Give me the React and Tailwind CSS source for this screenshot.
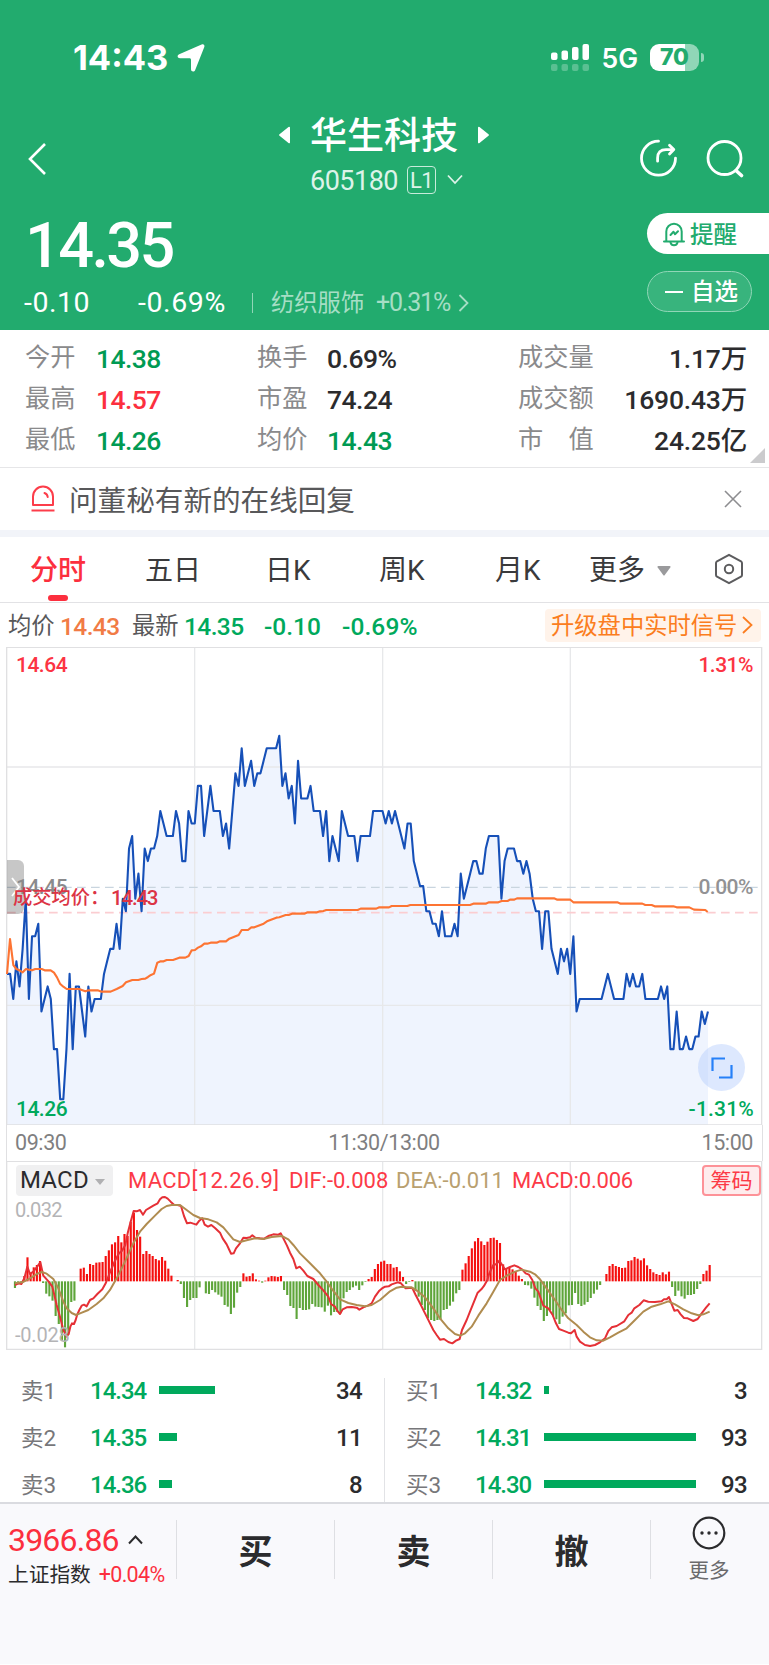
import clsx from 'clsx'

const FONT = "font-['Roboto','Noto_Sans_CJK_SC',sans-serif]"

// one entry per minute, in ticks of 0.01 from yesterday's close
const TICKS = [
  -7, -7, -9, -6, -8, -5, -1, -9, -4, -4, -3, -10, -9, -8, -9, -13, -13, -17, -17, -13,
  -7, -13, -8, -8, -10, -12, -8, -10, -9, -9, -9, -7, -6, -5, -5, -3, -5, -1, -2, 3,
  4, -1, 1, -2, 3, 2, 3, 3, 4, 6, 5, 4, 4, 4, 6, 5, 2, 2, 6, 5,
  5, 8, 8, 4, 6, 8, 6, 6, 6, 4, 5, 3, 6, 9, 8, 11, 8, 9, 10, 8,
  9, 9, 10, 11, 11, 11, 11, 12, 8, 9, 7, 8, 5, 10, 7, 7, 7, 8, 6, 6,
  6, 4, 6, 2, 4, 3, 2, 6, 5, 4, 4, 4, 2, 4, 4, 4, 4, 6, 6, 6,
  6, 5, 6, 5, 6, 5, 4, 3, 5, 5, 2, 1, 0, 0, -2, -2, -3, -3, -4, -2,
  -4, -4, -4, -3, -4, 1, -1, 0, 1, 2, 2, 1, 1, 3, 4, 4, 4, 4, -1, 2,
  3, 3, 3, 2, 2, 1, 2, 1, -1, -2, -2, -5, -2, -2, -5, -6, -7, -5, -6, -5,
  -7, -4, -10, -9, -9, -9, -9, -9, -9, -9, -9, -8, -7, -8, -9, -9, -9, -9, -7, -8,
  -7, -8, -8, -7, -9, -9, -9, -9, -9, -8, -9, -8, -13, -13, -10, -13, -13, -12, -13, -13,
  -12, -12, -10, -11, -10,
]

const MACD_BARS = [
  -20, -9, -8, 16, 72, 26, 42, 49, 61, -5, -37, -45, -58, -104, -128, -178, -198, -160, -62, -58,
  0, 38, 41, 22, 52, 49, 56, 57, 58, 76, 93, 111, 117, 136, 117, 142, 136, 179, 206, 154,
  134, 82, 91, 82, 76, 67, 63, 73, 62, 38, 17, 0, 4, -8, -50, -77, -56, -50, -50, -18,
  0, -36, -38, -26, -33, -40, -46, -71, -76, -98, -79, -34, -17, 24, 14, 16, 24, 6, 2, -4,
  2, 12, 16, 15, 13, 16, -26, -41, -74, -80, -113, -80, -86, -86, -84, -68, -76, -77, -78, -91,
  -73, -102, -92, -92, -96, -51, -32, -26, -18, -13, -26, -12, -2, 7, 13, 37, 52, 59, 62, 52,
  52, 41, 43, 30, 13, -8, -2, 4, -28, -46, -71, -86, -111, -116, -119, -116, -116, -86, -83, -73,
  -61, -36, -26, 35, 54, 76, 99, 120, 130, 120, 109, 119, 130, 131, 124, 115, 51, 39, 41, 36,
  31, 17, 7, -11, -12, -22, -49, -74, -86, -119, -104, -86, -105, -114, -128, -106, -96, -72, -71, -35,
  -68, -74, -70, -62, -50, -37, -25, -11, 0, 22, 46, 52, 46, 43, 40, 41, 61, 63, 73, 68,
  63, 69, 48, 37, 27, 22, 19, 27, 21, 29, -17, -44, -28, -45, -52, -41, -41, -38, -23, -8,
  22, 32, 49,
]

// the curves below use 3 units per css pixel
const AVG_LINE =
  '21,1002 30,897 40,975 49,987 58,991 68,997 78,987 87,989 96,991 106,987 125,987 134,991 152,991 162,998 171,1012 180,1031 190,1040 200,1047 237,1047 256,1054 265,1051 293,1051 305,1055 332,1055 350,1047 368,1038 378,1027 397,1020 415,1020 425,1017 436,1016 444,1011 453,1005 462,1001 472,968 482,964 491,964 500,960 519,960 538,953 556,953 566,948 575,931 585,930 594,923 603,919 613,911 622,911 632,908 650,908 660,904 678,904 688,896 716,885 725,870 744,870 754,862 763,862 791,851 801,844 829,833 838,832 857,825 866,825 876,821 913,821 923,817 951,817 960,814 970,813 979,810 1073,810 1082,806 1129,806 1138,802 1167,802 1175,798 1222,798 1231,795 1410,795 1420,791 1457,791 1467,787 1495,787 1505,783 1523,783 1530,779 1543,779 1551,775 1662,775 1672,779 1711,779 1720,787 1852,787 1862,791 1927,791 1936,795 1955,795 1964,799 2020,799 2030,802 2068,802 2082,809 2116,810 2123,816'

const DIF_LINE =
  '45,465 55,460 64,462 73,445 82,410 90,432 100,425 110,412 121,397 130,437 146,455 157,470 163,495 170,525 180,560 190,600 200,620 206,612 211,590 216,580 222,582 227,570 232,553 238,540 245,527 252,524 260,529 270,510 280,505 292,492 307,478 317,460 325,440 333,420 345,392 357,370 366,362 376,345 383,310 392,275 401,243 410,244 420,240 429,254 438,240 450,233 460,227 473,220 480,208 487,202 495,201 503,206 512,215 522,224 533,225 543,228 552,258 561,280 571,278 580,281 589,284 598,272 607,265 614,284 624,290 634,285 645,294 660,308 668,325 680,343 688,360 693,371 701,370 708,355 720,340 730,323 740,324 750,322 757,316 766,323 780,325 793,326 805,318 820,313 835,314 842,310 850,325 861,347 870,368 880,387 889,415 899,410 910,422 922,438 940,447 955,465 970,481 985,500 993,522 1005,530 1014,545 1020,552 1028,538 1040,532 1055,531 1070,533 1078,539 1090,532 1105,526 1115,520 1125,500 1138,482 1145,476 1155,470 1166,469 1175,463 1193,457 1203,460 1217,475 1228,474 1237,474 1247,495 1260,520 1280,560 1300,600 1310,615 1320,629 1332,627 1345,636 1357,640 1368,632 1379,627 1386,600 1400,570 1410,545 1420,520 1433,488 1444,478 1452,468 1462,450 1468,430 1480,405 1490,402 1498,392 1505,403 1515,418 1530,411 1543,406 1555,411 1566,418 1577,430 1587,434 1597,450 1606,475 1615,485 1622,505 1630,527 1645,535 1658,555 1668,580 1677,597 1690,602 1705,608 1713,610 1724,600 1730,620 1740,635 1755,645 1770,648 1785,645 1800,637 1815,625 1825,603 1835,592 1850,588 1873,574 1885,555 1895,548 1903,535 1918,525 1931,511 1945,515 1965,516 1985,514 1992,508 2000,508 2007,501 2013,517 2023,542 2033,540 2042,553 2052,564 2063,565 2080,573 2093,567 2105,550 2118,533 2129,520'

const DEA_LINE =
  '45,460 70,456 90,445 110,432 125,426 140,431 160,447 175,475 190,515 200,535 215,549 228,555 240,550 265,540 290,522 310,505 330,480 350,445 375,395 400,340 420,305 440,282 465,257 485,237 500,228 515,225 540,225 560,240 580,255 600,264 625,268 650,277 670,292 685,310 700,328 720,336 740,331 765,325 790,327 815,321 845,318 865,328 880,345 900,370 930,400 960,430 980,455 1000,483 1020,508 1045,519 1070,525 1095,529 1115,525 1140,510 1170,484 1190,473 1205,470 1220,472 1235,472 1255,485 1275,502 1300,535 1320,565 1345,595 1365,612 1380,617 1395,610 1415,590 1435,557 1460,520 1480,485 1500,450 1520,437 1545,425 1565,419 1590,425 1605,433 1620,448 1640,475 1665,510 1685,540 1705,565 1730,585 1750,605 1770,622 1790,631 1810,632 1830,622 1855,608 1880,595 1905,570 1930,545 1955,530 1980,523 2005,514 2025,523 2050,538 2075,550 2095,556 2110,553 2129,545'

const STEP = 9.388

function StatusBar() {
  return (
    <div className="flex h-[115px] items-start pl-[73px] pr-[65px] pt-[37px] font-['Inter',sans-serif] text-white">
      <span className="w-[94px] text-[34.5px] leading-[41px] font-bold">14:43</span>
      <svg className="ml-[9px] mt-[6px]" width="30" height="30" viewBox="0 0 30 30" fill="white">
        <path d="M25.6 1.4C27.5.6 29 2 28.3 4L19.200 27C18.3 29.3 15 29 15 26.3V16.8C15 15.7 14.5 15.2 13.4 15.2H4C1.3 15.2.8 12.2 3.2 11.2Z" />
      </svg>
      <div className="ml-auto flex">
        <svg className="mt-[6px]" width="40" height="30" viewBox="0 0 40 30" fill="white">
          <rect x="1" y="9.5" width="6.5" height="7.5" rx="2" />
          <rect x="11.5" y="7.5" width="6.5" height="9.5" rx="2" />
          <rect x="22" y="4" width="6.5" height="13" rx="2" />
          <rect x="32.5" y="1" width="6.5" height="16" rx="2" />
          <g opacity="0.25">
            <rect x="1" y="21" width="6.5" height="7" rx="2" />
            <rect x="11.5" y="21" width="6.5" height="7" rx="2" />
            <rect x="22" y="21" width="6.5" height="7" rx="2" />
            <rect x="32.5" y="21" width="6.5" height="7" rx="2" />
          </g>
        </svg>
        <span className="ml-[11px] mt-px text-[26.5px] leading-[40px] font-semibold">5G</span>
        <div className="ml-[12px] mt-[7px] flex h-[27px] items-center">
          <div className="flex h-[27px] w-[49px] items-center justify-center overflow-hidden rounded-[9px] bg-[linear-gradient(90deg,#fff_71%,#90d6b7_71%)]">
            <span className="text-[23px] leading-[27px] font-extrabold text-[#22ab6e]">70</span>
          </div>
          <div className="ml-[2px] h-[9px] w-[3px] rounded-r-full bg-[#90d6b7]" />
        </div>
      </div>
    </div>
  )
}

function Header() {
  return (
    <header className="h-[330px] bg-[#22ab6e] text-white">
      <StatusBar />
      <div className="flex h-[90px]">
        <svg className="ml-[25px] mt-[26px]" width="24" height="36" viewBox="0 0 24 36" fill="none" stroke="white" strokeWidth="2.6">
          <path d="M20 3 5 18l15 15" />
        </svg>
        <div className="ml-[227px] w-[220px]">
          <div className="flex h-[42px] items-center">
            <svg className="ml-[2px] -mt-[2px]" width="14" height="18" viewBox="0 0 14 18" fill="white">
              <path d="M12 1.5v15a1 1 0 0 1-1.5.6L1.5 9.800a1 1 0 0 1 0-1.6L10.5.9A1 1 0 0 1 12 1.5Z" />
            </svg>
            <span className="ml-[18px] mt-[2px] text-[37px] leading-[42px] font-medium">华生科技</span>
            <svg className="ml-[19px] -mt-[2px]" width="14" height="18" viewBox="0 0 14 18" fill="white">
              <path d="M1 1.5v15a1 1 0 0 0 1.5.6l9-7.3a1 1 0 0 0 0-1.6L2.5.9A1 1 0 0 0 1 1.5Z" />
            </svg>
          </div>
          <div className="mt-[8px] flex h-[30px] items-center pl-[34px] text-[#ddf3e9]">
            <span className="mt-[3px] w-[97px] text-[27px] tracking-[-0.5px]">605180</span>
            <span className="flex h-[28px] w-[29px] items-center justify-center rounded-[4px] border border-[#c8ebdb] text-[22px] tracking-[-0.5px]">L1</span>
            <svg className="ml-[11px]" width="16" height="12" viewBox="0 0 16 12" fill="none" stroke="#ddf3e9" strokeWidth="1.8">
              <path d="m1 1.5 7 7.5 7-7.5" />
            </svg>
          </div>
        </div>
        <svg className="ml-[143px] mt-[23px]" width="40" height="40" viewBox="0 0 40 40" fill="none" stroke="white" strokeWidth="2.8" strokeLinecap="round" strokeLinejoin="round">
          <path d="M19.500 3.2A17 17 0 1 0 36.500 20.2" />
          <path d="M18.600 23.2V20C18.600 14.500 21.500 11.700 27 11.700H34" />
          <path d="m30.5 7.3 4.3 4.200-4.300 4.500" />
        </svg>
        <svg className="ml-[26px] mt-[23px]" width="40" height="40" viewBox="0 0 40 40" fill="none" stroke="white" strokeWidth="2.8" strokeLinecap="round">
          <circle cx="19.5" cy="20" r="16.5" />
          <path d="m31.5 33 5 4.5" strokeWidth="3.6" />
        </svg>
      </div>
      <div className="flex h-[125px] justify-between">
        <div>
          <div className="mt-[8px] pl-[25px] text-[63px] leading-[66px] font-medium tracking-[-2.6px]">14.35</div>
          <div className="mt-[9px] flex h-[30px] items-center pl-[24px] text-[28.5px]">
            <span className="w-[114px] tracking-[0.5px]">-0.10</span>
            <span className="w-[114px] tracking-[0.6px]">-0.69%</span>
            <span className="mr-[18px] h-[20px] w-px bg-[#90d6b7]" />
            <span className="w-[105px] text-[23.3px] text-[#a6dec5]">纺织服饰</span>
            <span className="w-[75px] text-[25px] tracking-[-1.2px] text-[#a6dec5]">+0.31%</span>
            <svg className="ml-[7px]" width="11" height="18" viewBox="0 0 11 18" fill="none" stroke="#a6dec5" strokeWidth="1.8">
              <path d="m1.5 1 8 8-8 8" />
            </svg>
          </div>
        </div>
        <div className="flex w-[122px] flex-col text-[23.5px] leading-[40px] font-medium">
          <div className="mt-[8px] flex h-[41px] items-center rounded-l-full bg-white pl-[15px] text-[#22ab6e]">
            <svg className="mr-[4px]" width="24" height="26" viewBox="0 0 24 26" fill="none" stroke="#22ab6e" strokeWidth="2" strokeLinejoin="round" strokeLinecap="round">
              <path d="M2 20.5h20M4.3 20.5V10.5a7.7 7.7 0 0 1 15.4 0v10" />
              <path d="M8.5 21.5a3.6 3.6 0 0 0 7 0" />
              <path d="m8.5 14 3-3.2 1.5 2.4 3-3" />
            </svg>
            <span className="mt-[2px]">提醒</span>
          </div>
          <div className="mt-[17px] flex h-[41px] w-[105px] items-center rounded-full border border-[#90d6b7] bg-[#38b47d] pl-[17px]">
            <span className="mr-[8px] h-[2px] w-[18px] bg-white" />
            <span className="mt-px">自选</span>
          </div>
        </div>
      </div>
    </header>
  )
}

const STATS = [
  ['今开', '14.38', 'text-[#009a53]', '换手', '0.69%', 'text-[#2b2b2d]', '成交量', '1.17万'],
  ['最高', '14.57', 'text-[#fc2f3e]', '市盈', '74.24', 'text-[#2b2b2d]', '成交额', '1690.43万'],
  ['最低', '14.26', 'text-[#009a53]', '均价', '14.43', 'text-[#009a53]', '市　值', '24.25亿'],
]

function Stats() {
  return (
    <section className="relative h-[138px] border-b border-[#e6e6e8] pt-[7px] text-[25.2px]">
      {STATS.map(([l1, v1, c1, l2, v2, c2, l3, v3]) => (
        <div key={l1} className="flex h-[41px] items-center pl-[25px] pr-[22px] leading-[36px] text-[#8a8a8c]">
          <span className="w-[71px]">{l1}</span>
          <span className={clsx('w-[161px] pt-[3px] text-[26.5px] font-medium tracking-[-0.6px]', c1)}>{v1}</span>
          <span className="w-[70px]">{l2}</span>
          <span className={clsx('w-[191px] pt-[3px] text-[26.5px] font-medium tracking-[-0.5px]', c2)}>{v2}</span>
          <span>{l3}</span>
          <span className="ml-auto pt-[3px] text-[26.5px] font-medium tracking-[-0.2px] text-[#2b2b2d]">{v3}</span>
        </div>
      ))}
      <svg className="absolute right-[4px] bottom-[4px]" width="15" height="15" viewBox="0 0 15 15">
        <path d="M15 0v15H0Z" fill="#cbcbcd" />
      </svg>
    </section>
  )
}

function Notice() {
  return (
    <section className="flex h-[69px] items-center border-b-[7px] border-[#f2f4f9] pl-[30px] pr-[27px]">
      <svg width="26" height="28" viewBox="0 0 26 28" fill="none" stroke="#fc3d4a" strokeWidth="2">
        <path d="M3 20V11.5a10 10 0 0 1 20 0V20Z" strokeLinejoin="round" />
        <path d="M1.5 25.5h23" />
        <path d="M14.5 8c2 .7 3 2 3.2 4" strokeLinecap="round" />
      </svg>
      <span className="ml-[13px] mt-[3px] text-[28.6px] leading-[40px] text-[#58585a]">问董秘有新的在线回复</span>
      <svg className="ml-auto" width="18" height="18" viewBox="0 0 18 18" stroke="#8d8d90" strokeWidth="1.6">
        <path d="m1 1 16 16M17 1 1 17" />
      </svg>
    </section>
  )
}

function Tabs() {
  return (
    <nav className="flex h-[66px] items-center border-b border-[#e2e2e5] text-[28px] leading-[40px] text-[#3a3a3c] [&>span]:mt-[3px]">
      <span className="relative ml-[30px] w-[115px] font-medium text-[#fc2f3e]">
        分时
        <i className="absolute left-[18px] top-[44px] h-[6px] w-[20px] rounded-[3px] bg-[#fc2f3e]" />
      </span>
      <span className="w-[120px]">五日</span>
      <span className="w-[114px]">日K</span>
      <span className="w-[116px]">周K</span>
      <span className="w-[94px]">月K</span>
      <span>更多</span>
      <svg className="ml-[12px] mt-[3px]" width="14" height="10" viewBox="0 0 14 10" fill="#9a9a9c">
        <path d="M1.5 0h11a1 1 0 0 1 .8 1.5l-5.5 7.5a1 1 0 0 1-1.6 0L.7 1.5A1 1 0 0 1 1.5 0Z" />
      </svg>
      <svg className="ml-[43px] -mt-px" width="30" height="32" viewBox="0 0 30 32" fill="none" stroke="#5c5c5e" strokeWidth="2">
        <path d="M15 1.8 27 8.3Q28 9 28 10V22Q28 23 27 23.7L15 30.2 3 23.7Q2 23 2 22V10Q2 9 3 8.3Z" strokeLinejoin="round" />
        <circle cx="15" cy="16" r="4.2" />
      </svg>
    </nav>
  )
}

function QuoteLine() {
  return (
    <div className="flex h-[44px] items-center pl-[8px] pr-[8px] text-[24.5px] leading-[36px] text-[#00a95c] [&>b]:mt-[3px] [&>b]:font-medium">
      <span className="mt-px w-[52px] text-[23.3px] text-[#58585a]">均价</span>
      <b className="w-[72px] tracking-[-0.6px] text-[#f17b45]">14.43</b>
      <span className="mt-px w-[52px] text-[23.3px] text-[#58585a]">最新</span>
      <b className="w-[80px] tracking-[-0.6px]">14.35</b>
      <b className="w-[78px]">-0.10</b>
      <b className="tracking-[0.1px]">-0.69%</b>
      <span className="ml-auto flex h-[33px] w-[216px] items-center rounded-[4px] bg-[#fff3ea] pl-[6px] text-[23.3px] text-[#fb7d20]">
        <span className="mt-px">升级盘中实时信号</span>
        <svg className="ml-[5px]" width="11" height="18" viewBox="0 0 11 18" fill="none" stroke="#fb7d20" strokeWidth="1.8">
          <path d="m1 1 8.5 8L1 17" />
        </svg>
      </span>
    </div>
  )
}

function PriceChart() {
  const points = TICKS.map((t, i) => `${(21 + i * STEP).toFixed(1)},${(738.5 - t * 37.6).toFixed(1)}`).join(' ')
  const lastX = 21 + (TICKS.length - 1) * STEP

  return (
    <div className="relative h-[478px] text-[21px] leading-[24px] font-medium tracking-[-0.5px]">
      <svg className="block" width="769" height="478" viewBox="0 0 769 478" fill="none">
        <g transform="translate(0,-7) scale(0.33333)">
          <polygon points={`21,1455 ${points} ${lastX},1455`} fill="#eff4fe" />
          <path d="M584 22V1455M1148 22V1455M1711 22V1455M21 381H2284M21 1096H2284" stroke="#e7e8ea" strokeWidth="4" />
          <path d="M20 1455V22H2285V1455Z" stroke="#e0e0e2" strokeWidth="4" />
          <path d="M21 742H2284" stroke="#c9d5df" strokeWidth="4" strokeDasharray="26 16" />
          <path d="M21 818H2284" stroke="#fbcdd1" strokeWidth="5" strokeDasharray="26 16" />
          <polyline points={points} stroke="#1650b8" strokeWidth="6.3" strokeLinejoin="round" />
          <polyline points={AVG_LINE} stroke="#fd7433" strokeWidth="6.3" strokeLinejoin="round" />
        </g>
      </svg>
      <span className="absolute left-[16px] top-[6px] text-[#fc3443]">14.64</span>
      <span className="absolute right-[16px] top-[6px] text-[#fc3443]">1.31%</span>
      <span className="absolute right-[16px] top-[228px] text-[#929294]">0.00%</span>
      <span className="absolute left-[16px] bottom-[4px] text-[#00a95c]">14.26</span>
      <span className="absolute right-[15px] bottom-[4px] tracking-[0.2px] text-[#00a95c]">-1.31%</span>
      <div className="absolute left-[7px] top-[213px] flex h-[54px] w-[17px] items-center rounded-r-[6px] bg-black/22">
        <svg className="ml-[4px]" width="9" height="20" viewBox="0 0 9 20" fill="none" stroke="white" strokeWidth="1.8">
          <path d="m1 1 7 9-7 9" />
        </svg>
      </div>
      <span className="absolute left-[16px] top-[228px] text-[#8a8a8c]">14.45</span>
      <span className="absolute left-[13px] top-[239px] flex text-[#dc3445]">
        <span className="w-[98px] text-[19.3px] tracking-normal whitespace-nowrap">成交均价：</span>
        <span className="text-[20.5px] tracking-[-1.2px]">14.43</span>
      </span>
      <div className="absolute left-[698px] top-[397px] flex size-[47px] items-center justify-center rounded-full bg-[#b4cdfc]/45">
        <svg width="22" height="22" viewBox="0 0 22 22" fill="none" stroke="#2680f8" strokeWidth="2.2">
          <path d="M1.5 14V1.5H14M8 20.5H20.5V8" />
        </svg>
      </div>
    </div>
  )
}

function TimeAxis() {
  return (
    <div className="mx-[6px] grid h-[36px] grid-cols-3 items-center border-x border-[#e0e0e2] pl-[8px] pr-[9px] pt-px text-[21.5px] tracking-[-0.4px] text-[#7f7f81]">
      <span>09:30</span>
      <span className="text-center">11:30/13:00</span>
      <span className="text-right">15:00</span>
    </div>
  )
}

function MacdChart() {
  return (
    <div className="relative h-[189px]">
      <svg className="block" width="769" height="189" viewBox="0 0 769 189" fill="none">
        <g transform="translate(0,-31) scale(0.33333)">
          <path d="M584 94V658M1148 94V658M1711 94V658M21 440H2284" stroke="#e7e8ea" strokeWidth="4" />
          <path d="M20 658V94H2285V658Z" stroke="#e0e0e2" strokeWidth="4" />
          {MACD_BARS.map((v, i) => v !== 0 && (
            <rect
              key={i}
              x={41.700 + i * STEP}
              y={v > 0 ? 454 - v : 454}
              width="6.4"
              height={Math.abs(v)}
              fill={v > 0 ? '#f5100f' : '#5ea53a'}
            />
          ))}
          <polyline points={DIF_LINE} stroke="#e53036" strokeWidth="6" strokeLinejoin="round" />
          <polyline points={DEA_LINE} stroke="#b08c50" strokeWidth="6" strokeLinejoin="round" />
        </g>
      </svg>
      <div className="absolute inset-x-0 top-[4px] flex h-[31px] items-center pl-[16px] pr-[8px] text-[22px] leading-[30px] text-[#fc3a47]">
        <span className="flex h-full w-[97px] items-center rounded-[4px] bg-[#f0f0f1] pl-[4px] text-[24px] tracking-[0.2px] text-[#2b2b2d]">
          <span className="-mt-[2px]">MACD</span>
          <svg className="ml-[6px] mt-[2px]" width="10" height="6" viewBox="0 0 10 6" fill="#b0b0b2">
            <path d="M0 0h10L5 6Z" />
          </svg>
        </span>
        <span className="ml-[15px] w-[161px] tracking-[0.3px]">MACD[12.26.9]</span>
        <span className="w-[107px]">DIF:-0.008</span>
        <span className="w-[116px]  text-[#b9a06f]">DEA:-0.011</span>
        <span className="tracking-[-0.2px]">MACD:0.006</span>
        <span className="ml-auto flex h-[31px] w-[59px] items-center justify-center rounded-[4px] border-2 border-[#fd9298] bg-[#feeced] text-[21px]">筹码</span>
      </div>
      <span className="absolute left-[15px] top-[37px] text-[20px] leading-[24px] tracking-[-0.7px] text-[#b4b4b6]">0.032</span>
      <span className="absolute left-[15px] top-[162px] text-[20px] leading-[24px] tracking-[-0.2px] text-[#b4b4b6]">-0.028</span>
    </div>
  )
}

const ASKS = [['卖1', '14.34', 34], ['卖2', '14.35', 11], ['卖3', '14.36', 8]]
const BIDS = [['买1', '14.32', 3], ['买2', '14.31', 93], ['买3', '14.30', 93]]

function Book({ rows }) {
  return (
    <div className="pl-[21px] pr-[22px]">
      {rows.map(([label, price, qty]) => (
        <div key={label} className="flex h-[47px] items-center text-[24px] leading-[32px]">
          <span className="w-[69px] text-[22.5px] text-[#77777a]">{label}</span>
          <span className="w-[69px] font-medium tracking-[-1px] text-[#00a95c]">{price}</span>
          <span className="mb-[2px] h-[8px] bg-[#00a95c]" style={{ width: (qty / 93) * 152 }} />
          <span className="ml-auto font-medium tracking-[-0.7px] text-[#2b2b2d]">{qty}</span>
        </div>
      ))}
    </div>
  )
}

function BottomBar() {
  return (
    <footer className="flex h-[162px] items-start border-t-2 border-[#dadbe0] bg-[#f9f9fc] pt-[16px] text-[#2b2b2d]">
      <div className="w-[176px] pl-[8px]">
        <div className="-mt-px flex h-[42px] items-center text-[32px] leading-[42px] tracking-[-0.8px] text-[#fc2f3e]">
          3966.86
          <svg className="ml-[9px]" width="15" height="10" viewBox="0 0 15 10" fill="none" stroke="#2b2b2d" strokeWidth="2">
            <path d="m1 8.5 6.5-7 6.5 7" />
          </svg>
        </div>
        <div className="flex h-[28px] items-center text-[20.7px] leading-[28px]">
          上证指数
          <span className="ml-[8px] text-[21.5px] tracking-[-0.7px] text-[#fc2f3e]">+0.04%</span>
        </div>
      </div>
      {['买', '卖', '撤'].map(t => (
        <div key={t} className="flex h-[59px] w-[158px] items-center justify-center border-l border-[#dedfe3] pt-[4px] text-[34px] leading-[40px] font-bold">{t}</div>
      ))}
      <div className="flex h-[59px] flex-1 flex-col items-center border-l border-[#dedfe3] pr-[2px] text-[20.5px] leading-[28px] text-[#6a6a6c]">
        <svg className="-mt-[4px] shrink-0" width="34" height="34" viewBox="0 0 34 34" fill="none" stroke="#2b2b2d" strokeWidth="2.2">
          <circle cx="17" cy="17" r="15.3" />
          <g fill="#2b2b2d" stroke="none">
            <circle cx="10" cy="17" r="1.7" />
            <circle cx="17" cy="17" r="1.7" />
            <circle cx="24" cy="17" r="1.7" />
          </g>
        </svg>
        <span className="mt-[7px]">更多</span>
      </div>
    </footer>
  )
}

export default function App() {
  return (
    <div className={clsx('flex h-[1665px] w-[769px] flex-col overflow-hidden bg-white', FONT)}>
      <Header />
      <Stats />
      <Notice />
      <Tabs />
      <QuoteLine />
      <PriceChart />
      <TimeAxis />
      <MacdChart />
      <section className="grid h-[152px] grid-cols-[384px_385px] overflow-hidden pt-[17px]">
        <Book rows={ASKS} />
        <div className="mt-[11px] border-l border-[#e2e3e6] [&>div]:-mt-[11px]">
          <Book rows={BIDS} />
        </div>
      </section>
      <BottomBar />
    </div>
  )
}
